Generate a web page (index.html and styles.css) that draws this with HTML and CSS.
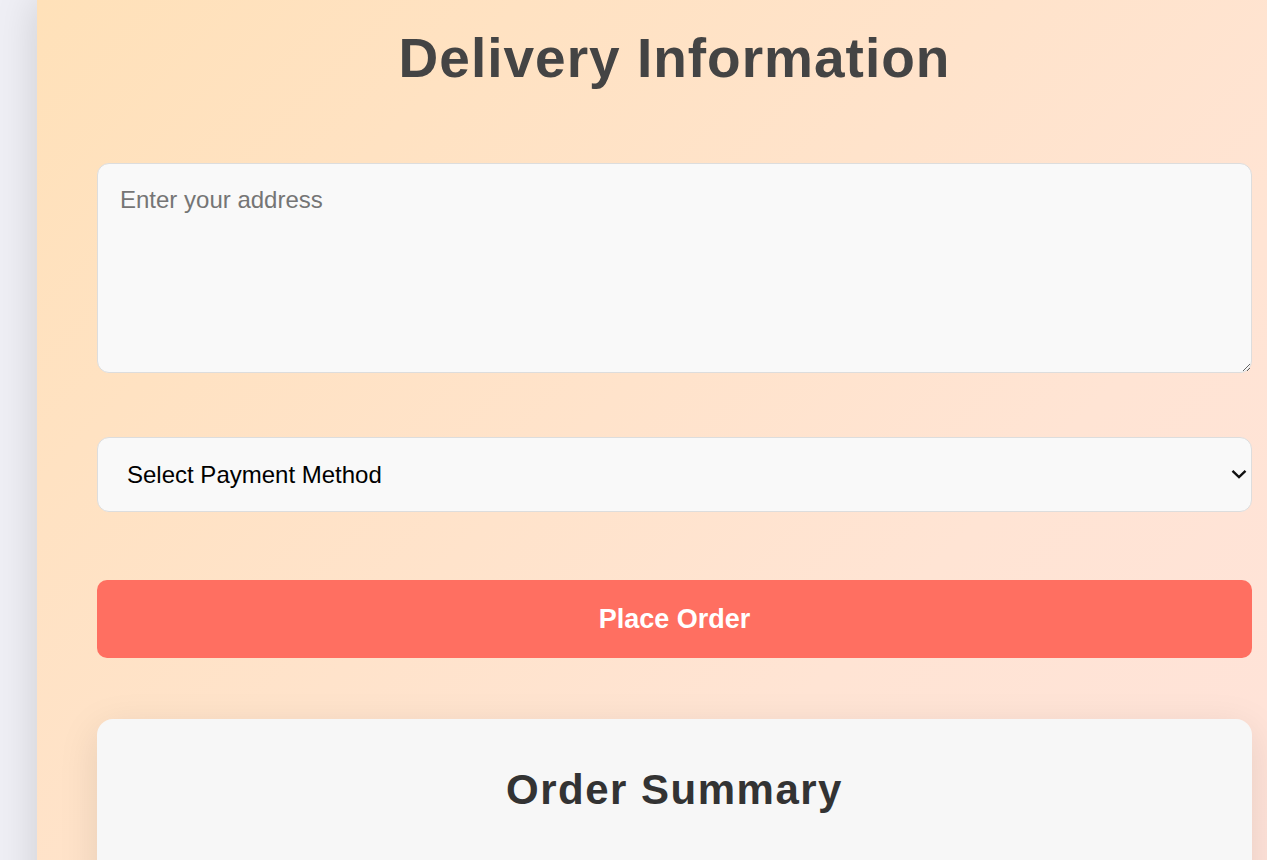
FILE: index.html
```html
<!DOCTYPE html>
<html lang="en">
<head>
<meta charset="utf-8">
<title>Delivery Information</title>
<link rel="stylesheet" href="styles.css">
</head>
<body>
<div class="page">
  <h1 class="title">Delivery Information</h1>
  <form class="form">
    <textarea class="address" placeholder="Enter your address"></textarea>
    <div class="select-wrap">
      <select class="payment">
        <option>Select Payment Method</option>
        <option>Credit Card</option>
        <option>Cash on Delivery</option>
      </select>
      <svg class="chevron" width="16" height="10" viewBox="0 0 16 10" aria-hidden="true">
        <path d="M1.5 1.8 L8 8 L14.5 1.8" fill="none" stroke="#111" stroke-width="2.4"/>
      </svg>
    </div>
    <button type="button" class="order-btn">Place Order</button>
  </form>
  <section class="summary">
    <h2 class="summary-title">Order Summary</h2>
  </section>
</div>
</body>
</html>
```
FILE: styles.css
```css
html, body {
  margin: 0;
  padding: 0;
  height: 100%;
  overflow: hidden;
}
body {
  background: #efeff5;
  font-family: "Liberation Sans", Arial, sans-serif;
}
.page {
  margin-left: 37px;
  width: 1275px;
  min-height: 100%;
  box-sizing: border-box;
  padding: 26px 60px 40px;
  background: linear-gradient(135deg, #ffe1b9 0%, #ffe4d4 60%, #ffe2dc 100%);
  box-shadow: 0 0 40px rgba(0, 0, 0, 0.15);
}
.title {
  margin: 0 0 73px;
  font-size: 55px;
  line-height: 64px;
  font-weight: 700;
  letter-spacing: 1px;
  color: #444;
  text-align: center;
}
.form {
  display: flex;
  flex-direction: column;
}
.address {
  box-sizing: border-box;
  height: 210px;
  padding: 22px 22px 20px;
  border: 1px solid #ddd;
  border-radius: 12px;
  background: #f9f9f9;
  font-family: "Liberation Sans", Arial, sans-serif;
  font-size: 24px;
  color: #333;
  margin: 0 0 64px;
}
.address::placeholder {
  color: #757575;
}
.select-wrap {
  position: relative;
  display: flex;
  margin: 0 0 68px;
}
.payment {
  flex: 1;
  box-sizing: border-box;
  height: 75px;
  padding: 0 40px 0 29px;
  border: 1px solid #ddd;
  border-radius: 12px;
  background: #f9f9f9;
  font-family: "Liberation Sans", Arial, sans-serif;
  font-size: 24px;
  color: #000;
  appearance: none;
  -webkit-appearance: none;
}
.chevron {
  position: absolute;
  right: 5px;
  top: 32px;
  pointer-events: none;
}
.order-btn {
  height: 78px;
  border: none;
  border-radius: 10px;
  background: #ff6f61;
  color: #fff;
  font-family: "Liberation Sans", Arial, sans-serif;
  font-size: 27px;
  font-weight: 700;
  cursor: pointer;
  margin: 0 0 61px;
}
.summary {
  background: #f7f7f7;
  border-radius: 16px;
  padding: 48px 30px 60px;
  min-height: 300px;
  box-shadow: 0 10px 40px rgba(0, 0, 0, 0.1);
}
.summary-title {
  margin: 0;
  font-size: 42px;
  line-height: 46px;
  font-weight: 700;
  letter-spacing: 1.5px;
  color: #333;
  text-align: center;
}
```
